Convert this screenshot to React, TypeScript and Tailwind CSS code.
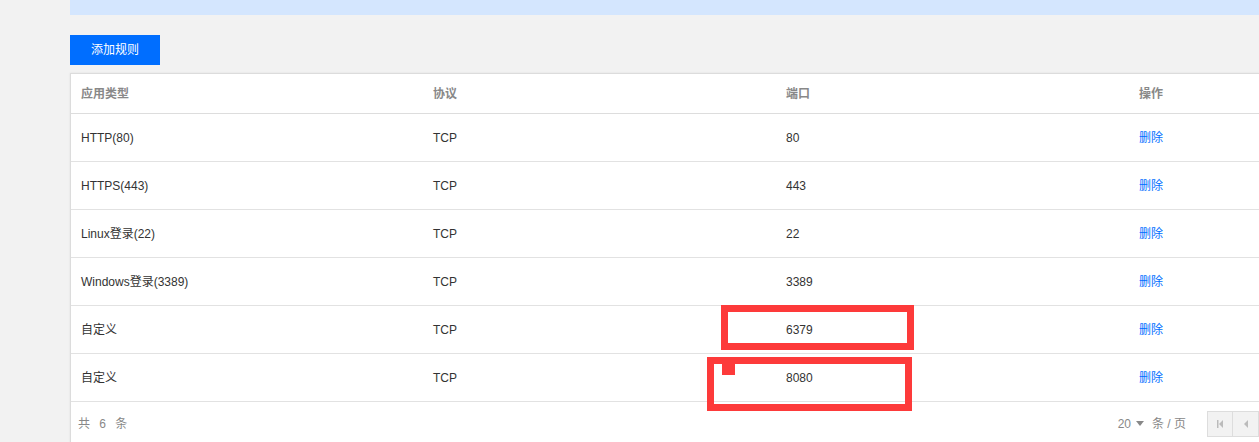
const rows = [
  { type: "HTTP(80)", proto: "TCP", port: "80" },
  { type: "HTTPS(443)", proto: "TCP", port: "443" },
  { type: "Linux登录(22)", proto: "TCP", port: "22" },
  { type: "Windows登录(3389)", proto: "TCP", port: "3389" },
  { type: "自定义", proto: "TCP", port: "6379" },
  { type: "自定义", proto: "TCP", port: "8080" },
];

export default function App() {
  return (
    <div
      className="relative w-[1259px] h-[442px] overflow-hidden bg-[#f2f2f2] text-[12px]"
      style={{ fontFamily: '"Liberation Sans", Arial, "Noto Sans CJK SC", sans-serif' }}
    >
      <div className="pl-[70px]">
        {/* notice bar */}
        <div className="h-[15px] bg-[#d4e6fe]" />

        <div className="pt-5">
          <button className="h-[30px] w-[90px] bg-[#006eff] text-white text-[12px]">添加规则</button>
        </div>

        {/* table card */}
        <div className="mt-2 bg-white border-t border-l border-[#dcdcdc] shadow-[0_0_2px_rgba(0,0,0,0.08)]">
          <div className="grid grid-cols-[352px_353px_353px_1fr] h-[40px] pt-[1px] items-center border-b border-[#dddddd] font-bold text-[#888888]">
            <div className="pl-[10px]">应用类型</div>
            <div className="pl-[10px]">协议</div>
            <div className="pl-[10px]">端口</div>
            <div className="pl-[10px]">操作</div>
          </div>
          {rows.map((r, i) => (
            <div
              key={i}
              className="grid grid-cols-[352px_353px_353px_1fr] h-[48px] pt-[1px] items-center border-b border-[#e2e2e2] text-[#333333]"
            >
              <div className="pl-[10px]">{r.type}</div>
              <div className="pl-[10px]">{r.proto}</div>
              <div className="pl-[10px]">{r.port}</div>
              <div className="pl-[10px]">
                <a className="text-[#006eff] cursor-pointer">删除</a>
              </div>
            </div>
          ))}
          <div className="flex items-center justify-between h-[41px] pl-[7px] pt-[2px]">
            <span className="text-[#888888] tracking-[3px]">共 6 条</span>
            <div className="flex items-center">
              <span className="text-[#888888] flex items-center gap-1 mr-[21px]">
                20
                <svg width="8" height="5" viewBox="0 0 8 5" className="ml-[1px]">
                  <path d="M0 0h8L4 5z" fill="#888888" />
                </svg>
                <span className="ml-1">条 / 页</span>
              </span>
              <div className="flex border border-[#dddddd] bg-[#f2f2f2] h-[26px]">
                <div className="w-[25px] flex items-center justify-center border-r border-[#dddddd]">
                  <svg width="8" height="8" viewBox="0 0 8 8">
                    <rect x="1" y="0" width="1.5" height="8" fill="#bbbbbb" />
                    <path d="M7 0v8L3 4z" fill="#bbbbbb" />
                  </svg>
                </div>
                <div className="w-[25px] flex items-center justify-center">
                  <svg width="6" height="8" viewBox="0 0 6 8">
                    <path d="M5 0v8L1 4z" fill="#bbbbbb" />
                  </svg>
                </div>
              </div>
            </div>
          </div>
        </div>
      </div>

      {/* annotation marks */}
      <div className="absolute left-[721px] top-[305px] w-[193px] h-[45px] border-[7px] border-[#fd3a3a]" />
      <div className="absolute left-[707px] top-[357px] w-[205px] h-[54px] border-[7px] border-[#fd3a3a]" />
      <div className="absolute left-[722px] top-[364px] w-[13px] h-[11px] bg-[#fd3a3a]" />
    </div>
  );
}
